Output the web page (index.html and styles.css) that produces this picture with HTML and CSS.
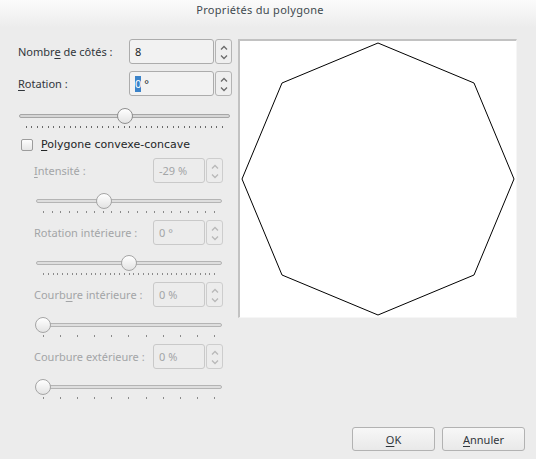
FILE: index.html
```html
<!DOCTYPE html>
<html lang="fr">
<head>
<meta charset="utf-8">
<title>Propriétés du polygone</title>
<link rel="stylesheet" href="styles.css">
</head>
<body>
<div class="titlebar"><span class="title">Propriétés du polygone</span></div>
<div class="main">
  <div class="left">
    <div class="row">
      <label class="lbl">Nombr<u>e</u> de côtés :</label>
      <div class="spin">
        <div class="field">8</div>
        <div class="btns">
          <svg class="arr" viewBox="0 0 8 5"><path d="M1 4.5 L4 1.5 L7 4.5"/></svg>
          <svg class="arr" viewBox="0 0 8 5"><path d="M1 0.5 L4 3.5 L7 0.5"/></svg>
        </div>
      </div>
    </div>
    <div class="row r2">
      <label class="lbl"><u>R</u>otation :</label>
      <div class="spin">
        <div class="field"><span class="sel">0</span> °</div>
        <div class="btns">
          <svg class="arr" viewBox="0 0 8 5"><path d="M1 4.5 L4 1.5 L7 4.5"/></svg>
          <svg class="arr" viewBox="0 0 8 5"><path d="M1 0.5 L4 3.5 L7 0.5"/></svg>
        </div>
      </div>
    </div>
    <div class="slider s-main">
      <div class="track"><div class="groove"></div><span class="knob" style="--p:0.5"></span></div>
      <div class="ticks"><i></i><i></i><i></i><i></i><i></i><i></i><i></i><i></i><i></i><i></i><i></i><i></i><i></i><i></i><i></i><i></i><i></i><i></i><i></i><i></i><i></i><i></i><i></i><i></i><i></i><i></i><i></i><i></i><i></i><i></i><i></i><i></i><i></i><i></i><i></i><i></i><i></i></div>
    </div>
    <div class="check">
      <span class="box"></span>
      <span class="check-lbl"><u>P</u>olygone convexe-concave</span>
    </div>
    <div class="group">
      <div class="row">
        <label class="lbl"><u>I</u>ntensité :</label>
        <div class="spin">
          <div class="field">-29 %</div>
          <div class="btns">
            <svg class="arr" viewBox="0 0 8 5"><path d="M1 4.5 L4 1.5 L7 4.5"/></svg>
            <svg class="arr" viewBox="0 0 8 5"><path d="M1 0.5 L4 3.5 L7 0.5"/></svg>
          </div>
        </div>
      </div>
      <div class="slider s-sub">
        <div class="track"><div class="groove"></div><span class="knob" style="--p:0.355"></span></div>
        <div class="ticks"><i></i><i></i><i></i><i></i><i></i><i></i><i></i><i></i><i></i><i></i><i></i><i></i><i></i><i></i><i></i><i></i><i></i><i></i><i></i><i></i><i></i></div>
      </div>
      <div class="row">
        <label class="lbl">Rotation intérieure :</label>
        <div class="spin">
          <div class="field">0 °</div>
          <div class="btns">
            <svg class="arr" viewBox="0 0 8 5"><path d="M1 4.5 L4 1.5 L7 4.5"/></svg>
            <svg class="arr" viewBox="0 0 8 5"><path d="M1 0.5 L4 3.5 L7 0.5"/></svg>
          </div>
        </div>
      </div>
      <div class="slider s-sub">
        <div class="track"><div class="groove"></div><span class="knob" style="--p:0.5"></span></div>
        <div class="ticks"><i></i><i></i><i></i><i></i><i></i><i></i><i></i><i></i><i></i><i></i><i></i><i></i><i></i><i></i><i></i><i></i><i></i><i></i><i></i><i></i><i></i><i></i><i></i><i></i><i></i><i></i><i></i><i></i><i></i><i></i><i></i><i></i><i></i><i></i><i></i><i></i><i></i></div>
      </div>
      <div class="row">
        <label class="lbl">Courb<u>u</u>re intérieure :</label>
        <div class="spin">
          <div class="field">0 %</div>
          <div class="btns">
            <svg class="arr" viewBox="0 0 8 5"><path d="M1 4.5 L4 1.5 L7 4.5"/></svg>
            <svg class="arr" viewBox="0 0 8 5"><path d="M1 0.5 L4 3.5 L7 0.5"/></svg>
          </div>
        </div>
      </div>
      <div class="slider s-sub">
        <div class="track"><div class="groove"></div><span class="knob" style="--p:0"></span></div>
        <div class="ticks"><i></i><i></i><i></i><i></i><i></i><i></i><i></i><i></i><i></i><i></i><i></i></div>
      </div>
      <div class="row">
        <label class="lbl">Courbure extérieure :</label>
        <div class="spin">
          <div class="field">0 %</div>
          <div class="btns">
            <svg class="arr" viewBox="0 0 8 5"><path d="M1 4.5 L4 1.5 L7 4.5"/></svg>
            <svg class="arr" viewBox="0 0 8 5"><path d="M1 0.5 L4 3.5 L7 0.5"/></svg>
          </div>
        </div>
      </div>
      <div class="slider s-sub">
        <div class="track"><div class="groove"></div><span class="knob" style="--p:0"></span></div>
        <div class="ticks"><i></i><i></i><i></i><i></i><i></i><i></i><i></i><i></i><i></i><i></i><i></i></div>
      </div>
    </div>
  </div>
  <div class="preview">
    <svg class="poly" viewBox="0 0 276 276" width="276" height="276">
      <polygon points="138,2 234,42 274,138 234,234 138,274 42,234 2,138 42,42"/>
    </svg>
  </div>
</div>
<div class="footer">
  <button class="btn"><u>O</u>K</button>
  <button class="btn"><u>A</u>nnuler</button>
</div>
</body>
</html>
```
FILE: styles.css
```css
html, body {
  margin: 0;
  padding: 0;
}
body {
  width: 536px;
  height: 459px;
  background: #ececec;
  font-family: "Noto Sans", "Open Sans", sans-serif;
  font-size: 11px;
  color: #31363b;
  display: flex;
  flex-direction: column;
  overflow: hidden;
}
u {
  text-decoration: underline;
  text-underline-offset: 2px;
}
.titlebar {
  height: 28px;
  background: linear-gradient(#fbfbfb, #ececec);
  display: flex;
  justify-content: center;
  padding-right: 16px;
  box-sizing: border-box;
}
.title {
  padding-top: 3px;
  line-height: 14px;
  color: #3f4a4f;
  letter-spacing: 0.3px;
}
.main {
  display: flex;
}
.left {
  width: 238px;
  padding-top: 11px;
}
.row {
  display: flex;
  align-items: center;
  height: 25px;
  padding-left: 18px;
}
.row.r2 {
  margin-top: 7px;
}
.lbl {
  width: 111px;
  line-height: 14px;
}
.spin {
  display: flex;
  height: 25px;
}
.field {
  width: 85px;
  box-sizing: border-box;
  border: 1px solid #acacac;
  border-radius: 3px;
  background: #f2f2f2;
  padding-left: 5px;
  display: flex;
  align-items: center;
  white-space: pre;
  color: #232627;
}
.sel {
  background: #3b83c9;
  color: #fff;
  padding: 1px 0;
  line-height: 14px;
}
.btns {
  width: 17px;
  margin-left: 1px;
  box-sizing: border-box;
  border: 1px solid #b4b4b4;
  border-radius: 3px;
  background: #efefef;
  display: flex;
  flex-direction: column;
  align-items: center;
  justify-content: space-between;
  padding: 5px 0 3px;
}
.arr {
  display: block;
  width: 8px;
  height: 5px;
  fill: none;
  stroke: #6b6b6b;
  stroke-width: 1.3;
}
.slider {
  margin-top: 11px;
}
.s-main {
  margin-left: 19px;
  width: 211px;
}
.track {
  position: relative;
  height: 18px;
}
.groove {
  position: relative;
  top: 7px;
  height: 4px;
  box-sizing: border-box;
  border: 1px solid #a6a6a6;
  border-radius: 3px;
  background: #d6d6d6;
}
.knob {
  position: absolute;
  top: 1px;
  left: calc(7px + var(--p) * (100% - 14px) - 8px);
  width: 16px;
  height: 16px;
  box-sizing: border-box;
  border: 1px solid #8f8f8f;
  border-radius: 50%;
  background: linear-gradient(#ffffff, #e3e3e3);
}
.ticks {
  display: flex;
  justify-content: space-between;
  padding: 0 7px;
  margin-top: 1px;
  height: 2px;
}
.ticks i {
  display: block;
  width: 1px;
  height: 2px;
  background: #6a6a6a;
}
.check {
  display: flex;
  align-items: center;
  margin-top: 10px;
  margin-left: 21px;
  height: 13px;
}
.box {
  width: 12px;
  height: 12px;
  box-sizing: border-box;
  border: 1px solid #9c9c9c;
  border-radius: 2px;
  background: linear-gradient(#fdfdfd, #e6e6e6);
}
.check-lbl {
  margin-left: 8px;
  font-family: "DejaVu Sans", sans-serif;
  font-size: 11px;
  color: #232627;
}
.group {
  margin-top: 7px;
  color: #a3a5a7;
}
.group .row {
  padding-left: 34px;
}
.group .slider + .row {
  margin-top: 7px;
}
.group .row + .slider {
  margin-top: 9px;
}
.group .lbl {
  width: 119px;
}
.group .field {
  width: 52px;
  border-color: #c9c9c9;
  background: #ececec;
  color: #a3a5a7;
}
.group .btns {
  border-color: #cdcdcd;
  background: #ececec;
}
.group .arr {
  stroke: #b8b8b8;
}
.s-sub {
  margin-left: 36px;
  width: 186px;
}
.group .groove {
  border-color: #b4b4b4;
  background: #dedede;
}
.group .knob {
  border-color: #a5a5a5;
}
.group .ticks i {
  background: #8a8a8a;
}
.preview {
  margin-top: 11px;
  width: 279px;
  height: 279px;
  box-sizing: border-box;
  border-top: 2px solid #c2c2c2;
  border-left: 2px solid #c2c2c2;
  border-right: 1px solid #f6f6f6;
  border-bottom: 1px solid #f6f6f6;
  background: #fff;
}
.poly {
  display: block;
}
.poly polygon {
  fill: none;
  stroke: #000;
  stroke-width: 1;
}
.footer {
  margin-top: auto;
  display: flex;
  justify-content: flex-end;
  gap: 7px;
  padding: 0 11px 8px 0;
}
.btn {
  width: 83px;
  height: 24px;
  border: 1px solid #b2b2b2;
  border-radius: 3px;
  background: linear-gradient(#f7f7f7, #e9e9e9);
  font-family: "Noto Sans", "Open Sans", sans-serif;
  font-size: 11px;
  color: #31363b;
  padding: 0;
}
```
